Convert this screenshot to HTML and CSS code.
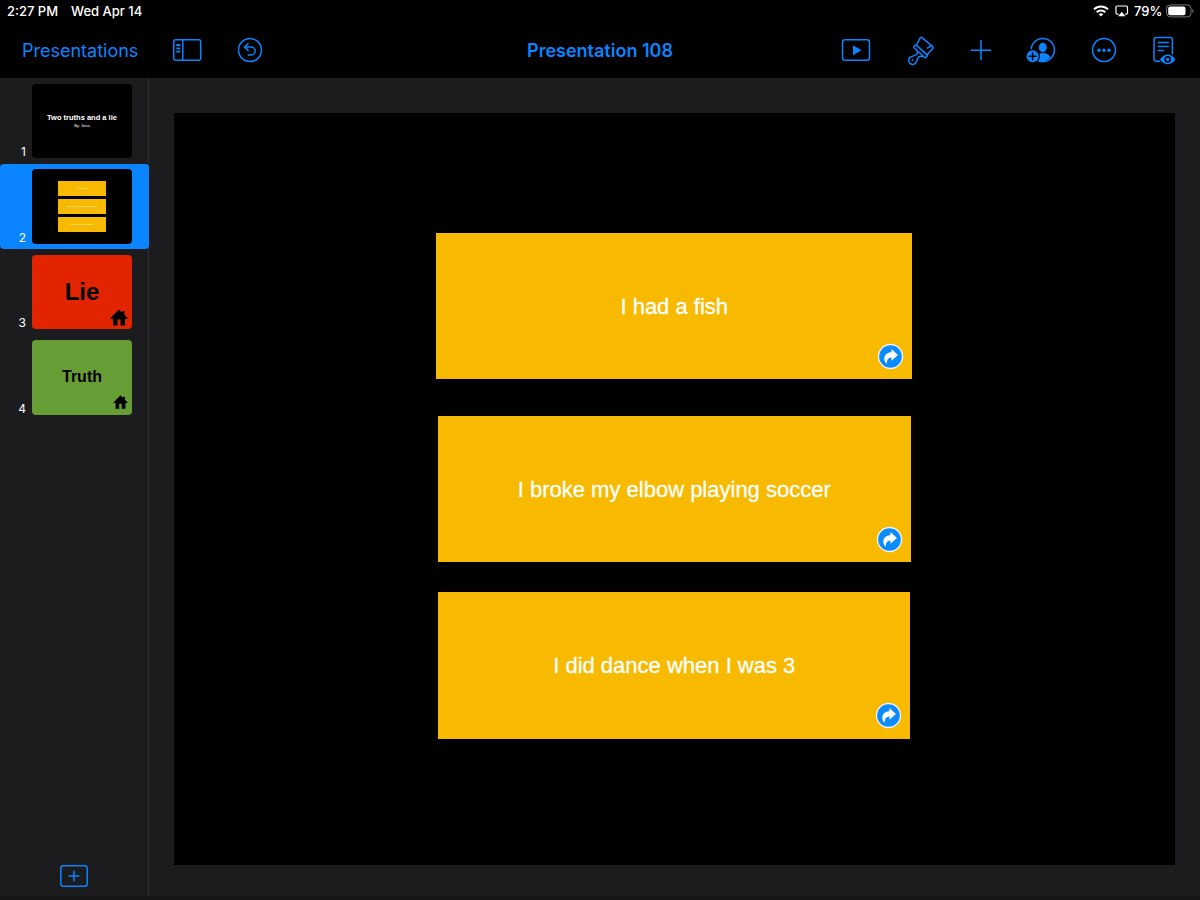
FILE: index.html
```html
<!DOCTYPE html>
<html lang="en">
<head>
    <meta charset="UTF-8">
    <meta name="viewport" content="width=device-width, initial-scale=1.0">
    <title>Presentation 108</title>
    <link rel="stylesheet" href="styles.css">
</head>
<body>

<header>
    <div class="status-bar">
        <span class="time">2:27 PM</span>
        <span class="date">Wed Apr 14</span>
        <div class="status-right">
            <svg class="wifi" width="16" height="12" viewBox="0 0 16 12" fill="none" stroke="#fff" stroke-width="2">
                <path d="M1 4.4a10 10 0 0 1 14 0"/>
                <path d="M3.7 7.2a6.1 6.1 0 0 1 8.6 0"/>
                <path d="M8 11.6L5.7 9.3a3.3 3.3 0 0 1 4.6 0z" fill="#fff" stroke="none"/>
            </svg>
            <svg class="airplay" width="14" height="12" viewBox="0 0 14 12">
                <path d="M3.5 9.2H2.2a1.2 1.2 0 0 1-1.2-1.2V2.2A1.2 1.2 0 0 1 2.2 1h9.1a1.2 1.2 0 0 1 1.2 1.2V8a1.2 1.2 0 0 1-1.2 1.2H10" fill="none" stroke="#fff" stroke-width="1.2"/>
                <path d="M6.75 6.7l3.7 4.6h-7.4z" fill="#fff"/>
            </svg>
            <span class="percent">79%</span>
            <svg class="battery" width="28" height="14" viewBox="0 0 28 14">
                <rect x="0.6" y="0.9" width="24.4" height="12" rx="3.7" fill="none" stroke="#777" stroke-width="1"/>
                <rect x="2.2" y="2.5" width="17.3" height="8.8" rx="2" fill="#fff"/>
                <path d="M26.3 5v4a2.2 2.2 0 0 0 0-4z" fill="#777"/>
            </svg>
        </div>
    </div>

    <nav class="toolbar">
        <div class="tools-left">
            <a class="back">Presentations</a>
            <svg class="icon panel-icon" viewBox="0 0 32 32">
                <rect x="2.7" y="5.8" width="27" height="20.5" rx="2"/>
                <path d="M11.8 5.8v20.5"/>
                <path d="M5.3 11h4M5.3 14.3h4M5.3 17.6h4" stroke-width="1.8"/>
            </svg>
            <svg class="icon undo-icon" viewBox="0 0 32 32">
                <circle cx="16" cy="16" r="11.5"/>
                <path d="M14.2 9.5L10.5 13l3.7 3.6M10.7 13h6.5a4 4 0 0 1 0 8h-3"/>
            </svg>
        </div>
        <h1>Presentation 108</h1>
        <div class="tools-right">
            <svg class="icon play-icon" viewBox="0 0 32 32">
                <rect x="2.5" y="5.8" width="27" height="20.5" rx="2.5"/>
                <path d="M13 11.2v10l8.5-5z" class="fill"/>
            </svg>
            <svg class="icon brush-icon" viewBox="0 0 32 32">
                <path d="M11.2 11.5L15.2 3.8q.8-1.1 1.8-.2L27.7 12.6q1 .9 0 1.8l-6 6.8"/>
                <path d="M22.4 14.2l4.2-2.7"/>
                <path d="M11.6 11.4L21.8 20.6q.9.9 0 1.8l-.7.8q-.8.8-1.7 0L9.3 14q-.9-.9-.1-1.7l.7-.8q.8-.8 1.7-.1z"/>
                <path d="M12 16.4l.5 2q.2 1.6-1.2 2.2l-4.6 2a4 4 0 1 0 4.6 5.4l1.9-4.4q.7-1.5 2.4-1.4l2.1.2"/>
                <circle cx="7.5" cy="26" r=".9" class="fill"/>
            </svg>
            <svg class="icon plus-icon" viewBox="0 0 32 32">
                <path d="M16 6.6v19.2M6.4 16.2h19.2"/>
            </svg>
            <svg class="icon person-icon" viewBox="0 0 32 32">
                <circle cx="17.8" cy="16" r="11.6"/>
                <ellipse cx="17.8" cy="13.4" rx="4" ry="4.6" class="fill"/>
                <path d="M11 21.5q2.5-2.4 6.8-2.4 5 0 7.8 3.8a11.5 11.5 0 0 1-11.8 3.8z" class="fill"/>
                <circle cx="7.6" cy="22.3" r="7.3" fill="#000" stroke="none"/>
                <circle cx="7.6" cy="22.3" r="6" class="fill"/>
                <path d="M7.6 18.8v7M4.1 22.3h7" stroke="#000"/>
            </svg>
            <svg class="icon more-icon" viewBox="0 0 32 32">
                <circle cx="16" cy="16" r="11.5"/>
                <circle cx="11" cy="16.2" r="1.7" class="fill"/>
                <circle cx="16" cy="16.2" r="1.7" class="fill"/>
                <circle cx="21" cy="16.2" r="1.7" class="fill"/>
            </svg>
            <svg class="icon doc-icon" viewBox="0 0 32 32">
                <path d="M11.8 27.2H8.2a2.2 2.2 0 0 1-2.2-2.2V5.7a2.2 2.2 0 0 1 2.2-2.2h14a2.2 2.2 0 0 1 2.2 2.2v14"/>
                <path d="M10.3 8.4h9.9M10.3 12.5h9.9M10.3 16.6h5"/>
                <path d="M12 25.4q3.4-4.8 7.7-4.8t7.7 4.8q-3.4 4.8-7.7 4.8T12 25.4z" class="fill"/>
                <circle cx="19.7" cy="25.4" r="2.5" fill="#0a84ff" stroke="#000" stroke-width="1.6"/>
            </svg>
        </div>
    </nav>
</header>

<main>
    <aside class="navigator">
        <div class="row">
            <span class="number">1</span>
            <div class="thumb title-slide">
                <b>Two truths and a lie</b>
                <small>By: Jena</small>
            </div>
        </div>
        <div class="row selected">
            <span class="number">2</span>
            <div class="thumb cards-slide">
                <div class="mini">I had a fish</div>
                <div class="mini">I broke my elbow playing soccer</div>
                <div class="mini">I did dance when I was 3</div>
            </div>
        </div>
        <div class="row">
            <span class="number">3</span>
            <div class="thumb lie-slide">
                <b>Lie</b>
                <svg class="home" viewBox="0 0 18 17"><path d="M9 .4L12 3.4V2h2.4v3.8L17.6 9v.8H15V16.6h-4.5v-6h-3v6H3V9.8H.4V9z"/></svg>
            </div>
        </div>
        <div class="row">
            <span class="number">4</span>
            <div class="thumb truth-slide">
                <b>Truth</b>
                <svg class="home" viewBox="0 0 18 17"><path d="M9 .4L12 3.4V2h2.4v3.8L17.6 9v.8H15V16.6h-4.5v-6h-3v6H3V9.8H.4V9z"/></svg>
            </div>
        </div>
        <svg class="add-slide" width="30" height="24" viewBox="0 0 30 24">
            <rect x="1.8" y="1.8" width="26.4" height="20.4" rx="2.4"/>
            <path d="M15 6.6v10.8M9.6 12h10.8"/>
        </svg>
    </aside>

    <section class="workspace">
        <div class="slide">
            <div class="card first">
                <span>I had a fish</span>
                <svg class="link" viewBox="-13.5 -13.5 27 27"><circle r="12"/><path d="M1-7.6L7.4-1.6 1 4.2V1.1Q-3.6 1-4 7.4-6.4 4.4-6.3 2-5.7-3.8 1-4.4z"/></svg>
            </div>
            <div class="card second">
                <span>I broke my elbow playing soccer</span>
                <svg class="link" viewBox="-13.5 -13.5 27 27"><circle r="12"/><path d="M1-7.6L7.4-1.6 1 4.2V1.1Q-3.6 1-4 7.4-6.4 4.4-6.3 2-5.7-3.8 1-4.4z"/></svg>
            </div>
            <div class="card third">
                <span>I did dance when I was 3</span>
                <svg class="link" viewBox="-13.5 -13.5 27 27"><circle r="12"/><path d="M1-7.6L7.4-1.6 1 4.2V1.1Q-3.6 1-4 7.4-6.4 4.4-6.3 2-5.7-3.8 1-4.4z"/></svg>
            </div>
        </div>
    </section>
</main>

</body>
</html>
```
FILE: styles.css
```css
* {
    box-sizing: border-box;
}
body {
    margin: 0;
    height: 900px;
    display: flex;
    flex-direction: column;
    overflow: hidden;
    background-color: #1c1c1e;
    color: #fff;
    font-family: Inter, "Liberation Sans", sans-serif;
}
header {
    height: 78px;
    background-color: #000;
}

/* Status bar */
.status-bar {
    display: flex;
    align-items: center;
    height: 22px;
    padding: 0 6px 0 7px;
    font-size: 13px;
    font-weight: 500;
    white-space: nowrap;
}
.time {
    width: 64px;
}
.status-right {
    display: flex;
    align-items: center;
    margin-left: auto;
}
.airplay {
    margin-left: 6px;
}
.percent {
    width: 29px;
    margin-left: 5px;
}
.battery {
    margin-left: 3px;
}

/* Toolbar */
.toolbar {
    display: grid;
    grid-template-columns: 1fr auto 1fr;
    align-items: center;
    height: 56px;
    color: #0a84ff;
}
.tools-left, .tools-right {
    display: flex;
    align-items: center;
}
.tools-right {
    justify-content: flex-end;
    padding-right: 20px;
}
.back {
    width: 149px;
    padding-left: 22px;
    font-size: 18px;
    white-space: nowrap;
}
.toolbar h1 {
    margin: 0;
    font-size: 18px;
    font-weight: 600;
}
.icon {
    flex: none;
    width: 32px;
    height: 32px;
    fill: none;
    stroke: #0a84ff;
    stroke-width: 1.5;
    stroke-linecap: round;
    stroke-linejoin: round;
}
.icon .fill {
    fill: #0a84ff;
    stroke: none;
}
.panel-icon {
    margin-left: 22px;
}
.panel-icon path {
    stroke-linecap: butt;
}
.undo-icon {
    margin-left: 31px;
}
.brush-icon {
    margin-left: 33px;
}
.plus-icon {
    margin-left: 28px;
}
.person-icon {
    margin-left: 27.5px;
}
.more-icon {
    margin-left: 31px;
}
.doc-icon {
    margin-left: 28.5px;
}

/* Slide navigator */
main {
    display: flex;
    flex: 1;
    border-bottom: 4px solid #171719;
}
.navigator {
    display: flex;
    flex-direction: column;
    width: 149px;
    border-right: 1px solid #303032;
}
.row {
    display: flex;
    align-items: flex-end;
    width: 148.5px;
    height: 85.5px;
    padding-bottom: 5.5px;
    border-radius: 4px;
}
.selected {
    background-color: #0a84ff;
}
.number {
    width: 32px;
    padding-right: 6px;
    text-align: right;
    font-size: 12px;
    line-height: 13px;
}
.thumb {
    position: relative;
    display: flex;
    flex-direction: column;
    align-items: center;
    justify-content: center;
    width: 100px;
    height: 74.5px;
    border-radius: 4px;
    background-color: #000;
    font-family: "Liberation Sans", sans-serif;
    overflow: hidden;
}
.title-slide b {
    font-size: 7.5px;
    line-height: 9px;
    white-space: nowrap;
}
.title-slide small {
    font-size: 4px;
    line-height: 7px;
}
.cards-slide {
    gap: 3px;
}
.mini {
    width: 48px;
    height: 15px;
    background-color: #f8ba00;
    font-size: 2.2px;
    line-height: 15px;
    text-align: center;
}
.lie-slide {
    background-color: #e32400;
    color: #000;
    font-size: 24px;
}
.truth-slide {
    background-color: #669d34;
    color: #000;
    font-size: 16px;
}
.home {
    position: absolute;
    right: 4px;
    bottom: 3px;
    width: 18px;
    height: 17px;
}
.truth-slide .home {
    width: 15px;
    height: 14px;
    bottom: 6px;
}
.add-slide {
    margin: auto 0 8px 59px;
    fill: none;
    stroke: #0a84ff;
    stroke-width: 1.5;
}

/* Slide canvas */
.workspace {
    flex: 1;
    padding: 35px 25px 0 24.5px;
}
.slide {
    display: flex;
    flex-direction: column;
    align-items: center;
    height: 751.5px;
    padding-top: 119.5px;
    background-color: #000;
    font-family: "Liberation Sans", sans-serif;
    font-size: 22px;
}
.card {
    position: relative;
    display: flex;
    align-items: center;
    justify-content: center;
    height: 146.5px;
    padding-top: 2px;
    background-color: #f8ba00;
    -webkit-text-stroke: 0.3px #fff;
}
.first {
    width: 476px;
}
.second {
    width: 473px;
    margin-top: 36.5px;
}
.third {
    width: 472px;
    margin-top: 30px;
}
.link {
    position: absolute;
    right: 8px;
    bottom: 9.5px;
    width: 27px;
    height: 27px;
}
.link circle {
    fill: #0a8cff;
    stroke: #f4f4f4;
    stroke-width: 1.3;
}
.link path {
    fill: #fff;
}
```
